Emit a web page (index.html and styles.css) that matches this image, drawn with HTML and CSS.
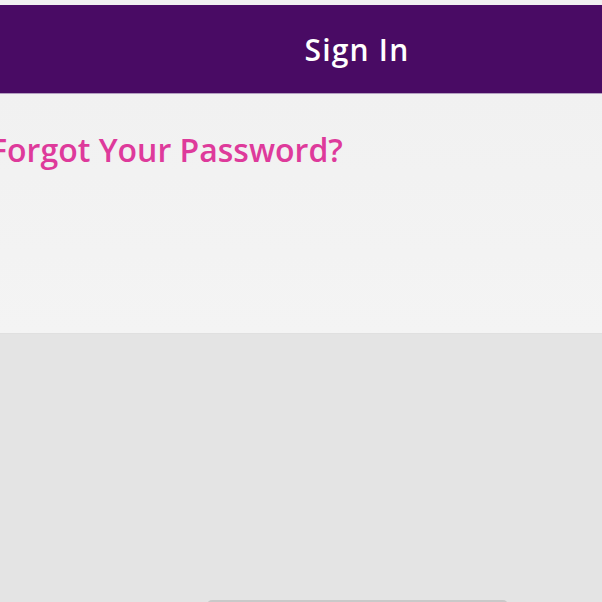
FILE: index.html
```html
<!DOCTYPE html>
<html lang="en">

<head>
    <meta charset="UTF-8">
    <meta name="viewport" content="width=device-width, initial-scale=1.0">
    <title>Sign In</title>
    <link rel="stylesheet" href="styles.css">
</head>

<body>
    <div class="page">
        <div class="top-strip"></div>
        <header class="site-header">
            <h1>Sign In</h1>
        </header>

        <section class="forgot">
            <h2>Forgot Your Password?</h2>
        </section>

        <main class="content">
            <div class="card"></div>
        </main>
    </div>
</body>

</html>
```
FILE: styles.css
```css
body {
    margin: 0;
    background-color: #e4e4e4;
    font-family: "Open Sans", "Noto Sans", sans-serif;
    overflow: hidden;
}

.page {
    width: 715px;
}

.top-strip {
    height: 5px;
    background-color: #f0f0f0;
}

.site-header {
    height: 88px;
    background-color: #490b64;
    border-bottom: 1px solid #b39fc0;
    display: flex;
    align-items: center;
    justify-content: center;
}

.site-header h1 {
    margin: 0 0 0 -1px;
    color: white;
    font-size: 30px;
    font-weight: 600;
    letter-spacing: 1.2px;
}

.forgot {
    height: 240px;
    background: linear-gradient(#f1f1f1, #f4f4f4);
    border-bottom: 1px solid #e0e0e0;
    box-sizing: border-box;
}

.forgot h2 {
    margin: 0 0 0 -10px;
    padding-top: 36px;
    color: #de3a9b;
    font-size: 32px;
    font-weight: 600;
    line-height: 40px;
}

.content {
    padding-top: 266px;
}

.card {
    width: 301px;
    height: 60px;
    margin: 0 auto;
    border-top: 2px solid #c9c9c9;
    border-radius: 5px;
}
```
